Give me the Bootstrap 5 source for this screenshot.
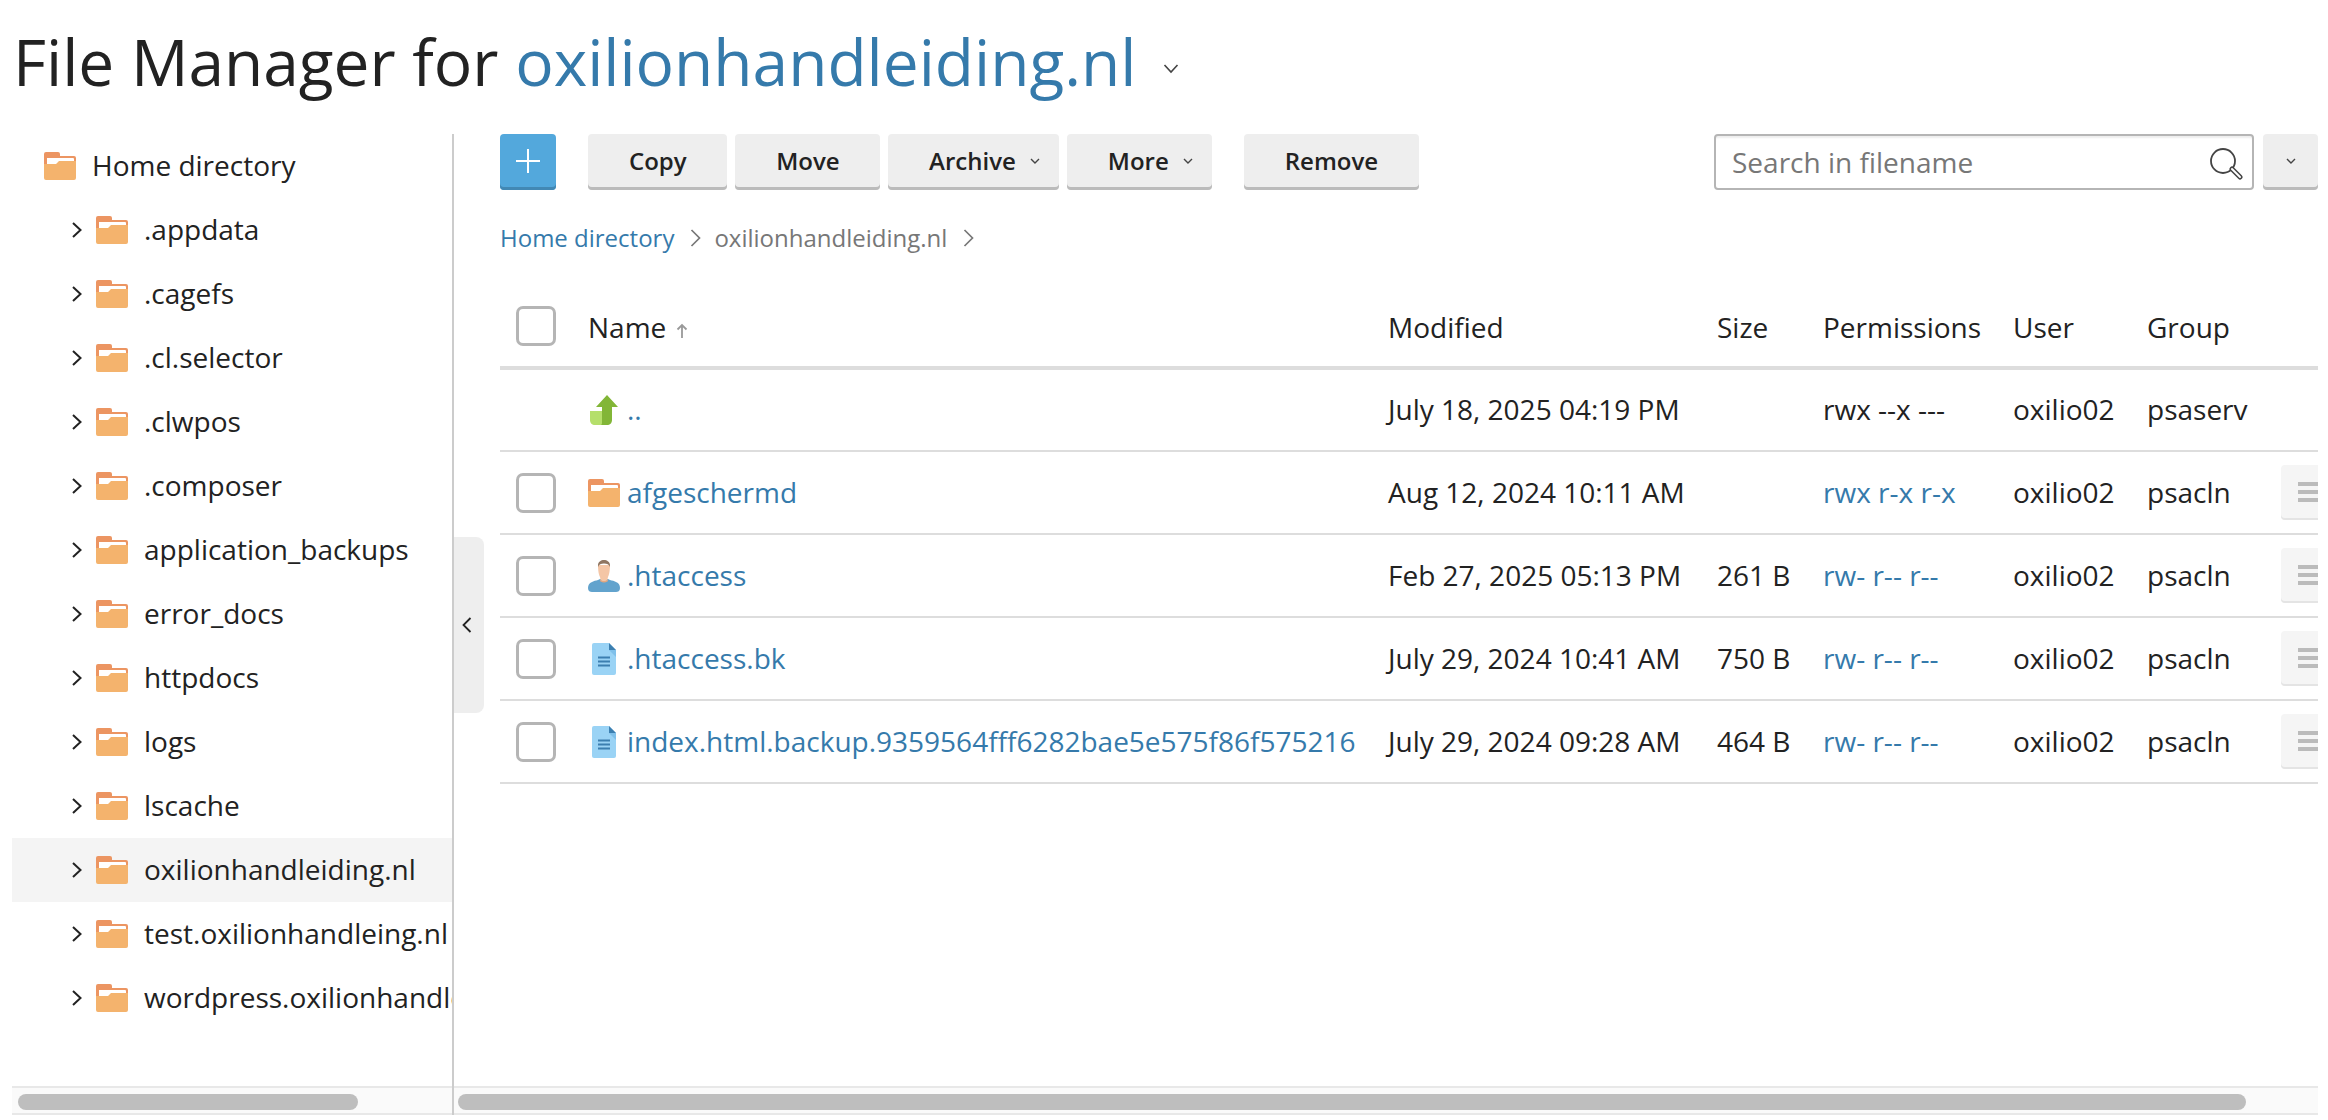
<!DOCTYPE html>
<html lang="en">
<head>
<meta charset="utf-8">
<title>File Manager</title>
<link href="https://cdn.jsdelivr.net/npm/bootstrap@5.3.0/dist/css/bootstrap.min.css" rel="stylesheet">
<style>
html,body{height:1120px;overflow:hidden;background:#fff}
body{font-family:"Open Sans",sans-serif;font-size:28px;color:#222;line-height:38px}
a{color:#357aab;text-decoration:none}
.fm-app{margin:0 10px 0 12px;height:1115px;overflow:hidden;display:flex;flex-direction:column}
.fm-head{height:134px;flex:none;display:flex;align-items:flex-start;padding:20px 0 0 1px}
.fm-title{font-family:"Open Sans",sans-serif;font-size:64px;font-weight:400;line-height:84px;margin:0;color:#222}
.fm-title-chev{margin:43px 0 0 27px}
.fm-split{flex:1;display:flex;min-height:0;position:relative}
.fm-tree{width:442px;flex:none;border-right:2px solid #ccc;display:flex;flex-direction:column;min-width:0}
.fm-tree-body{flex:1;overflow:hidden;min-height:0}
.fm-node{height:64px;display:flex;align-items:center;white-space:nowrap;padding:0 0 2px 60px}
.fm-node svg.ch{width:10px;height:18px;margin:2px 14px 0 0;flex:none}
.fm-node svg.fo{width:32px;height:28px;margin:2px 16px 0 0;flex:none}
.fm-node.root{padding-left:32px}
.fm-node.sel{background:#f4f4f4}
.fm-bar{height:29px;flex:none;background:#fafafa;border-top:2px solid #e8e8e8;border-bottom:2px solid #e8e8e8;padding-top:6px}
.fm-thumb{height:16px;background:#bebebe;border-radius:8px}
.fm-thumb.a{width:340px;margin-left:6px}
.fm-thumb.b{width:1788px;margin-left:4px}
.fm-main{flex:1;min-width:0;display:flex;flex-direction:column}
.fm-main-body{flex:1;min-height:0;overflow:hidden;padding-left:46px}
.fm-tools{display:flex;height:56px}
.fm-btn{height:56px;padding:0 40.5px 0 41px;background:#eee;border:0;border-radius:4px;box-shadow:inset 0 -3px 0 #bbb;color:#222;font-size:24px;font-weight:600;line-height:54px;display:flex;align-items:flex-start;white-space:nowrap}
.fm-btn:hover{background:#eee;color:#222}
.fm-btn svg{width:10px;height:7px;margin:24px 0 0 14px}
.fm-btn.fm-drop{padding-right:19px}
.fm-add{width:56px;padding:0;background:#53a8dc;box-shadow:inset 0 -3px 0 #4288b4;justify-content:center;align-items:center}
.fm-add:hover{background:#53a8dc}
.fm-add svg{width:26px;height:26px;margin:0 0 2px}
.fm-gap8{margin-left:8px}
.fm-gap32{margin-left:32px}
.fm-search{margin-left:auto;width:540px;position:relative;flex:none}
.fm-search input{height:56px;border:2px solid #b5b5b5;border-radius:4px;padding:0 60px 0 16px;font-size:28px;color:#222;box-shadow:inset 0 3px 2px -1px #eee}
.fm-search input::placeholder{color:#777}
.fm-search svg{position:absolute;right:11px;top:13px;width:34px;height:34px}
.fm-more{width:55px;padding:0;justify-content:center;margin-left:9px}
.fm-more svg{margin:24px 0 0}
.fm-crumbs{margin:0;padding:0;height:96px;display:flex;align-items:center;font-size:24px;list-style:none;color:#777}
.fm-crumbs li{display:flex;align-items:center}
.fm-crumbs svg{width:11px;height:18px;margin:0 13px 0 16px}
.fm-table{table-layout:fixed;width:1886px;border-collapse:collapse;margin:0;color:#222}
.fm-table th,.fm-table td{padding:0;vertical-align:middle;font-weight:400;white-space:nowrap;background:transparent;box-shadow:none;color:inherit}
.fm-table thead tr{height:82px}
.fm-table thead th{border-bottom:4px solid #ddd;padding-top:2px}
.fm-table thead .fm-check{margin-top:-2px}
.fm-table tbody tr{height:83px}
.fm-table tbody td{border-bottom:2px solid #ddd;padding-bottom:2px}
.fm-table tbody .fm-check,.fm-table tbody .fm-ico,.fm-table tbody .fm-menu{margin-top:2px}
.c1{width:88px}.c2{width:800px}.c3{width:329px}.c4{width:106px}.c5{width:190px}.c6{width:134px}.c7{width:134px}.c8{width:105px}
.fm-check{width:40px;height:40px;margin:0 0 0 16px;border:3px solid #b5b5b5;border-radius:5px;display:block;float:none}
.fm-name{display:flex;align-items:center}
.fm-ico{width:32px;height:32px;margin-right:7px;flex:none}
.fm-ico.fl{height:28px}
.fm-sort{width:12px;height:16px;margin-left:10px}
.fm-menu{width:60px;height:55px;background:#f5f5f5;border-radius:4px;box-shadow:inset 0 -2px 0 #e4e4e4;padding:0 0 2px 17px;display:flex;flex-direction:column;justify-content:center;gap:4px;border:0}
.fm-menu i{display:block;height:4px;background:#bbb}
.fm-handle{position:absolute;left:442px;top:403px;width:30px;height:176px;background:#eee;border-radius:0 8px 8px 0;display:flex;align-items:center;justify-content:center;padding-right:4px}
.fm-handle svg{width:10px;height:18px}
</style>
</head>
<body>
<svg width="0" height="0" class="position-absolute">
<defs>
<symbol id="i-folder" viewBox="0 0 32 28">
<path d="M2 0h12a2 2 0 0 1 2 2v2h14a2 2 0 0 1 2 2v12H0V2a2 2 0 0 1 2-2z" fill="#ec9562"/>
<path d="M3 6h26a1 1 0 0 1 1 1v6H3z" fill="#fff"/>
<path d="M0 12h12l3-3h17v17a2 2 0 0 1-2 2H2a2 2 0 0 1-2-2z" fill="#f4b36d"/>
</symbol>
<symbol id="i-chev" viewBox="0 0 10 18"><path d="M1 2l7.500 7L1 16" fill="none" stroke="#222" stroke-width="2"/></symbol>
<symbol id="i-crumb" viewBox="0 0 11 18"><path d="M1.500 1l8 8-8 8" fill="none" stroke="#777" stroke-width="1.700"/></symbol>
<symbol id="i-down" viewBox="0 0 10 7"><path d="M1 1l4 4 4-4" fill="none" stroke="#444" stroke-width="1.400"/></symbol>
<symbol id="i-file" viewBox="0 0 32 32">
<path d="M6 0h15l7 7v23a2 2 0 0 1-2 2H6a2 2 0 0 1-2-2V2a2 2 0 0 1 2-2z" fill="#9ad3f5"/>
<path d="M21 7h7v7z" fill="#7fc0ea"/>
<path d="M21 0l7 7h-7z" fill="#3c7fb0"/>
<path d="M10 13.500h12v2H10zM10 17.500h12v2H10zM10 21.500h12v2H10z" fill="#3c7fb0"/>
</symbol>
<symbol id="i-user" viewBox="0 0 32 32">
<path d="M0 28c0-6 6-7 10-8l2-1h8l2 1c4 1 10 2 10 8 0 3-2 4-4 4H4c-2 0-4-1-4-4z" fill="#62a3cd"/>
<path d="M10 5c0 3 .3 9 2 12 .5 2 .5 3 .5 3s1 1.500 3.500 1.500 3.500-1.500 3.500-1.500 0-1 .5-3c1.700-3 2-9 2-12z" fill="#f4c6a6"/>
<path d="M12.500 19.500c1 1 2 1.500 3.500 1.500s2.500-.5 3.500-1.500l.5 1.500s-1.500 1.500-4 1.500-4-1.500-4-1.500z" fill="#e3a881"/>
<path d="M10 7V5c0-3 3-5 6-5s6 2 6 5v2c-1-3-3-3.500-6-3.500S11 4 10 7z" fill="#8f7662"/>
</symbol>
<symbol id="i-up" viewBox="0 0 32 32">
<path d="M2 17h12v14H7c-3 0-5-2-5-5z" fill="#b5df6b"/>
<path d="M8 13L19 1l11 12h-6v13c0 3-2 5-5 5h-6c1-.5 1-2 1-3V13z" fill="#82b637"/>
</symbol>
</defs>
</svg>

<div class="fm-app">
  <header class="fm-head">
    <h1 class="fm-title">File Manager for <a href="#">oxilionhandleiding.nl</a></h1>
    <svg class="fm-title-chev" width="16" height="12" viewBox="0 0 16 12"><path d="M1.500 2l6.500 7 6.500-7" fill="none" stroke="#444" stroke-width="1.600"/></svg>
  </header>
  <div class="fm-split">
    <aside class="fm-tree">
      <div class="fm-tree-body">
        <div class="fm-node root"><svg class="fo"><use href="#i-folder"/></svg>Home directory</div>
        <div class="fm-node"><svg class="ch"><use href="#i-chev"/></svg><svg class="fo"><use href="#i-folder"/></svg>.appdata</div>
        <div class="fm-node"><svg class="ch"><use href="#i-chev"/></svg><svg class="fo"><use href="#i-folder"/></svg>.cagefs</div>
        <div class="fm-node"><svg class="ch"><use href="#i-chev"/></svg><svg class="fo"><use href="#i-folder"/></svg>.cl.selector</div>
        <div class="fm-node"><svg class="ch"><use href="#i-chev"/></svg><svg class="fo"><use href="#i-folder"/></svg>.clwpos</div>
        <div class="fm-node"><svg class="ch"><use href="#i-chev"/></svg><svg class="fo"><use href="#i-folder"/></svg>.composer</div>
        <div class="fm-node"><svg class="ch"><use href="#i-chev"/></svg><svg class="fo"><use href="#i-folder"/></svg>application_backups</div>
        <div class="fm-node"><svg class="ch"><use href="#i-chev"/></svg><svg class="fo"><use href="#i-folder"/></svg>error_docs</div>
        <div class="fm-node"><svg class="ch"><use href="#i-chev"/></svg><svg class="fo"><use href="#i-folder"/></svg>httpdocs</div>
        <div class="fm-node"><svg class="ch"><use href="#i-chev"/></svg><svg class="fo"><use href="#i-folder"/></svg>logs</div>
        <div class="fm-node"><svg class="ch"><use href="#i-chev"/></svg><svg class="fo"><use href="#i-folder"/></svg>lscache</div>
        <div class="fm-node sel"><svg class="ch"><use href="#i-chev"/></svg><svg class="fo"><use href="#i-folder"/></svg>oxilionhandleiding.nl</div>
        <div class="fm-node"><svg class="ch"><use href="#i-chev"/></svg><svg class="fo"><use href="#i-folder"/></svg>test.oxilionhandleing.nl</div>
        <div class="fm-node"><svg class="ch"><use href="#i-chev"/></svg><svg class="fo"><use href="#i-folder"/></svg>wordpress.oxilionhandleing.nl</div>
      </div>
      <div class="fm-bar"><div class="fm-thumb a"></div></div>
    </aside>
    <main class="fm-main">
      <div class="fm-main-body">
        <div class="fm-tools">
          <button class="btn fm-btn fm-add" aria-label="Add"><svg viewBox="0 0 26 26"><path d="M13 1v24M1 13h24" stroke="#fff" stroke-width="2" fill="none"/></svg></button>
          <button class="btn fm-btn fm-gap32">Copy</button>
          <button class="btn fm-btn fm-gap8">Move</button>
          <button class="btn fm-btn fm-gap8 fm-drop">Archive<svg><use href="#i-down"/></svg></button>
          <button class="btn fm-btn fm-gap8 fm-drop">More<svg><use href="#i-down"/></svg></button>
          <button class="btn fm-btn fm-gap32">Remove</button>
          <div class="fm-search">
            <input class="form-control" type="text" placeholder="Search in filename">
            <svg viewBox="0 0 34 34"><circle cx="14" cy="14" r="12" fill="none" stroke="#444" stroke-width="1.800"/><path d="M23 22l8 8" stroke="#444" stroke-width="5" stroke-linecap="round"/><path d="M23 22l8 8" stroke="#fff" stroke-width="2" stroke-linecap="round"/></svg>
          </div>
          <button class="btn fm-btn fm-more" aria-label="Search options"><svg><use href="#i-down"/></svg></button>
        </div>
        <ol class="fm-crumbs">
          <li><a href="#">Home directory</a><svg><use href="#i-crumb"/></svg></li>
          <li>oxilionhandleiding.nl<svg><use href="#i-crumb"/></svg></li>
        </ol>
        <table class="table fm-table">
          <colgroup><col class="c1"><col class="c2"><col class="c3"><col class="c4"><col class="c5"><col class="c6"><col class="c7"><col class="c8"></colgroup>
          <thead>
            <tr>
              <th><input class="form-check-input fm-check" type="checkbox" aria-label="Select all"></th>
              <th>Name<svg class="fm-sort" viewBox="0 0 12 16"><path d="M6 15V2M1.500 6.500L6 2l4.500 4.500" fill="none" stroke="#999" stroke-width="1.800"/></svg></th>
              <th>Modified</th><th>Size</th><th>Permissions</th><th>User</th><th>Group</th><th></th>
            </tr>
          </thead>
          <tbody>
            <tr>
              <td></td>
              <td><div class="fm-name"><svg class="fm-ico"><use href="#i-up"/></svg><a href="#">..</a></div></td>
              <td>July 18, 2025 04:19 PM</td><td></td><td>rwx --x ---</td><td>oxilio02</td><td>psaserv</td><td></td>
            </tr>
            <tr>
              <td><input class="form-check-input fm-check" type="checkbox" aria-label="Select"></td>
              <td><div class="fm-name"><svg class="fm-ico fl"><use href="#i-folder"/></svg><a href="#">afgeschermd</a></div></td>
              <td>Aug 12, 2024 10:11 AM</td><td></td><td><a href="#">rwx r-x r-x</a></td><td>oxilio02</td><td>psacln</td>
              <td><button class="fm-menu" aria-label="Menu"><i></i><i></i><i></i></button></td>
            </tr>
            <tr>
              <td><input class="form-check-input fm-check" type="checkbox" aria-label="Select"></td>
              <td><div class="fm-name"><svg class="fm-ico"><use href="#i-user"/></svg><a href="#">.htaccess</a></div></td>
              <td>Feb 27, 2025 05:13 PM</td><td>261 B</td><td><a href="#">rw- r-- r--</a></td><td>oxilio02</td><td>psacln</td>
              <td><button class="fm-menu" aria-label="Menu"><i></i><i></i><i></i></button></td>
            </tr>
            <tr>
              <td><input class="form-check-input fm-check" type="checkbox" aria-label="Select"></td>
              <td><div class="fm-name"><svg class="fm-ico"><use href="#i-file"/></svg><a href="#">.htaccess.bk</a></div></td>
              <td>July 29, 2024 10:41 AM</td><td>750 B</td><td><a href="#">rw- r-- r--</a></td><td>oxilio02</td><td>psacln</td>
              <td><button class="fm-menu" aria-label="Menu"><i></i><i></i><i></i></button></td>
            </tr>
            <tr>
              <td><input class="form-check-input fm-check" type="checkbox" aria-label="Select"></td>
              <td><div class="fm-name"><svg class="fm-ico"><use href="#i-file"/></svg><a href="#">index.html.backup.9359564fff6282bae5e575f86f575216</a></div></td>
              <td>July 29, 2024 09:28 AM</td><td>464 B</td><td><a href="#">rw- r-- r--</a></td><td>oxilio02</td><td>psacln</td>
              <td><button class="fm-menu" aria-label="Menu"><i></i><i></i><i></i></button></td>
            </tr>
          </tbody>
        </table>
      </div>
      <div class="fm-bar"><div class="fm-thumb b"></div></div>
    </main>
    <div class="fm-handle"><svg viewBox="0 0 10 18"><path d="M8.500 2L1.500 9l7 7" fill="none" stroke="#222" stroke-width="1.800"/></svg></div>
  </div>
</div>
<script src="https://cdn.jsdelivr.net/npm/bootstrap@5.3.0/dist/js/bootstrap.bundle.min.js"></script>
</body>
</html>
